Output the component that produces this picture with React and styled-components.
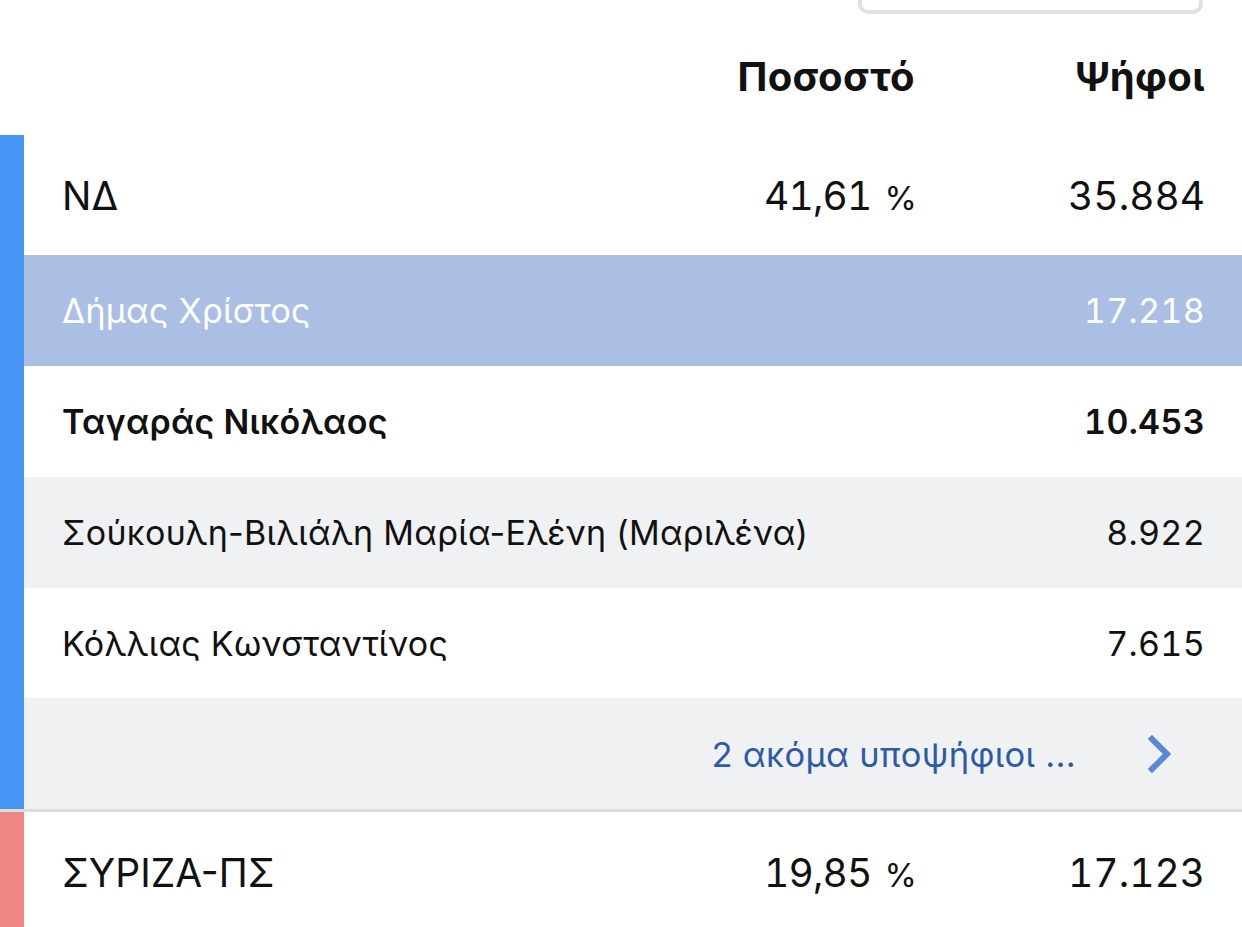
import styled, { createGlobalStyle } from 'styled-components';

const Global = createGlobalStyle`
  html, body { margin: 0; padding: 0; background: #fff; }
  body { font-family: Inter, "Noto Sans", "DejaVu Sans", sans-serif; color: #111; }
`;

const Page = styled.div`
  width: 1242px;
  height: 927px;
  overflow: hidden;
  background: #fff;
`;

const TopStrip = styled.div`
  height: 14px;
  overflow: hidden;
  display: flex;
  justify-content: flex-end;
  padding-right: 39px;
`;

const SearchBox = styled.div`
  width: 345px;
  height: 40px;
  margin-top: -26px;
  box-sizing: border-box;
  border: 4px solid #dfe1e5;
  border-radius: 10px;
  background: #fff;
`;

const cols = `
  display: grid;
  grid-template-columns: 1fr 260px 290px;
  align-items: center;
  padding-right: 37px;
`;

const Header = styled.div`
  ${cols}
  height: 121px;
  padding-left: 62px;
  font-size: 40px;
  font-weight: 700;
  letter-spacing: 0.4px;
  & > span { text-align: right; padding-top: 4px; }
`;

const Party = styled.section`
  display: flex;
  border-bottom: ${(p) => (p.$divider ? '3px solid #dcdde2' : 'none')};
`;

const Stripe = styled.div`
  width: 24px;
  flex: none;
  background: ${(p) => p.$color};
`;

const Body = styled.div`
  flex: 1;
  display: flex;
  flex-direction: column;
`;

const PartyRow = styled.div`
  ${cols}
  height: ${(p) => p.$h || 120}px;
  padding-left: 38px;
  font-size: 39px;
`;

const Cell = styled.div`
  text-align: right;
  font-variant-numeric: tabular-nums;
`;

const PctCell = styled(Cell)`
  margin-right: -2px;
  letter-spacing: -0.8px;
`;

const Pct = styled.span`
  font-size: 33px;
  margin-left: 13px;
  letter-spacing: 0;
`;

const CandRow = styled.div`
  ${cols}
  height: 111px;
  padding-left: 38px;
  font-size: 34px;
  letter-spacing: 0.3px;
  background: ${(p) => p.$bg || '#fff'};
  color: ${(p) => p.$fg || '#111'};
  font-weight: ${(p) => (p.$bold ? 600 : 400)};
  border-bottom: ${(p) => (p.$line ? '1px solid #eceef1' : 'none')};
  box-sizing: border-box;
`;

const Name = styled.div`
  grid-column: 1 / 3;
  white-space: nowrap;
`;

const MoreRow = styled.div`
  height: 110px;
  background: #f0f1f3;
  display: flex;
  align-items: center;
  justify-content: flex-end;
  padding-right: 70px;
  gap: 72px;
  color: #2b5ba8;
  font-size: 34.5px;
  letter-spacing: 0.3px;
`;

const Chevron = () => (
  <svg width="24" height="38" viewBox="0 0 24 38" fill="none">
    <path d="M4 4 L19 19 L4 34" stroke="#5a87d6" strokeWidth="6" strokeLinecap="square" />
  </svg>
);

const candidates = [
  { name: 'Δήμας Χρίστος', votes: '17.218', bg: '#abbfe4', fg: '#fff' },
  { name: 'Ταγαράς Νικόλαος', votes: '10.453', bold: true },
  { name: 'Σούκουλη-Βιλιάλη Μαρία-Ελένη (Μαριλένα)', votes: '8.922', bg: '#f0f1f3' },
  { name: 'Κόλλιας Κωνσταντίνος', votes: '7.615', line: true },
];

export default function App() {
  return (
    <Page>
      <Global />
      <TopStrip>
        <SearchBox />
      </TopStrip>
      <Header>
        <div />
        <span>Ποσοστό</span>
        <span>Ψήφοι</span>
      </Header>

      <Party $divider>
        <Stripe $color="#4596f5" />
        <Body>
          <PartyRow>
            <div>ΝΔ</div>
            <PctCell>41,61<Pct>%</Pct></PctCell>
            <Cell>35.884</Cell>
          </PartyRow>
          {candidates.map((c) => (
            <CandRow key={c.name} $bg={c.bg} $fg={c.fg} $bold={c.bold} $line={c.line}>
              <Name>{c.name}</Name>
              <Cell>{c.votes}</Cell>
            </CandRow>
          ))}
          <MoreRow>
            <span>2 ακόμα υποψήφιοι ...</span>
            <Chevron />
          </MoreRow>
        </Body>
      </Party>

      <Party>
        <Stripe $color="#f08783" />
        <Body>
          <PartyRow>
            <div>ΣΥΡΙΖΑ-ΠΣ</div>
            <PctCell>19,85<Pct>%</Pct></PctCell>
            <Cell>17.123</Cell>
          </PartyRow>
        </Body>
      </Party>
    </Page>
  );
}
